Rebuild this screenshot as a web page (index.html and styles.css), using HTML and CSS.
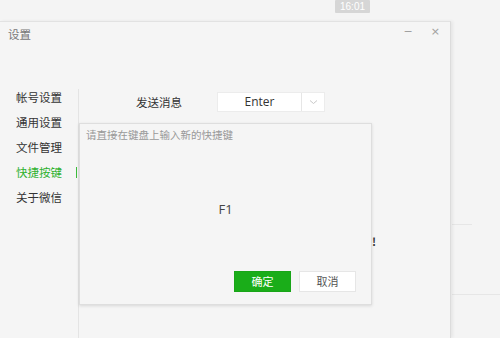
FILE: index.html
```html
<!DOCTYPE html>
<html lang="zh">
<head>
<meta charset="utf-8">
<link rel="stylesheet" href="styles.css">
</head>
<body>
<div class="topbar"><span class="time">16:01</span></div>
<div class="bg-line l1"></div>
<div class="bg-line l2"></div>
<div class="window">
  <div class="titlebar">
    <span class="title">设置</span>
    <div class="controls">
      <span class="min">−</span>
      <span class="close">×</span>
    </div>
  </div>
  <div class="main">
    <nav class="sidebar">
      <div class="item">帐号设置</div>
      <div class="item">通用设置</div>
      <div class="item">文件管理</div>
      <div class="item active">快捷按键<span class="mark"></span></div>
      <div class="item">关于微信</div>
    </nav>
    <div class="divider"></div>
    <div class="content">
      <div class="row">
        <span class="label">发送消息</span>
        <div class="select"><span class="value">Enter</span><span class="arrow"><svg width="9" height="6" viewBox="0 0 9 6"><path d="M1 1.5 L4.5 4.5 L8 1.5" fill="none" stroke="#c8c8c8" stroke-width="1"/></svg></span></div>
      </div>
      <div class="bang">!</div>
    </div>
  </div>
  <div class="dialog">
    <div class="hint">请直接在键盘上输入新的快捷键</div>
    <div class="key">F1</div>
    <div class="buttons">
      <button class="btn ok">确定</button>
      <button class="btn cancel">取消</button>
    </div>
  </div>
</div>
</body>
</html>
```
FILE: styles.css
```css
html, body {
  margin: 0;
  padding: 0;
}
body {
  width: 500px;
  height: 338px;
  overflow: hidden;
  background: #f4f4f4;
  font-family: "Noto Sans CJK SC", "Noto Sans", sans-serif;
  color: #333;
  position: relative;
}
.topbar {
  height: 21px;
  display: flex;
  align-items: flex-start;
}
.time {
  margin-left: 335px;
  width: 35px;
  height: 13px;
  background: #d6d6d6;
  color: #fff;
  font-family: "Liberation Sans", sans-serif;
  font-size: 10px;
  line-height: 13px;
  text-align: center;
  border-radius: 1px;
}
.bg-line {
  position: absolute;
  left: 452px;
  height: 1px;
  background: #e6e6e6;
}
.l1 {
  top: 224px;
  width: 20px;
}
.l2 {
  top: 294px;
  width: 48px;
}
.window {
  position: relative;
  width: 451px;
  height: 317px;
  box-sizing: border-box;
  background: #f5f5f5;
  border-top: 1px solid #e2e2e2;
  border-right: 1px solid #dcdcdc;
  box-shadow: 2px 0 3px rgba(0,0,0,0.06);
}
.titlebar {
  height: 62px;
  display: flex;
  justify-content: space-between;
  align-items: flex-start;
}
.title {
  margin-left: 8px;
  margin-top: 4px;
  font-size: 11.5px;
  line-height: 16px;
  color: #777;
}
.controls {
  display: flex;
  gap: 18px;
  margin-right: 10px;
  margin-top: 2px;
  color: #a0a0a0;
  font-family: "DejaVu Sans", sans-serif;
  font-size: 11px;
  line-height: 16px;
}
.main {
  display: flex;
  height: 254px;
}
.sidebar {
  width: 78px;
  flex: none;
  padding-top: 1px;
}
.item {
  height: 25px;
  line-height: 25px;
  padding-left: 16px;
  font-size: 11.5px;
  color: #333;
  display: flex;
  justify-content: space-between;
  align-items: center;
}
.item.active {
  color: #2fb12f;
}
.mark {
  width: 1px;
  height: 11px;
  background: #3cbc3c;
  margin-right: 1px;
}
.divider {
  width: 1px;
  background: #e4e4e4;
  margin-top: 5px;
  flex: none;
}
.content {
  flex: 1;
  padding-left: 57px;
  padding-top: 8px;
}
.row {
  display: flex;
  align-items: center;
  height: 20px;
}
.label {
  width: 81px;
  font-size: 11.5px;
  color: #333;
}
.select {
  width: 108px;
  height: 20px;
  box-sizing: border-box;
  background: #fff;
  border: 1px solid #ececec;
  display: flex;
}
.value {
  width: 83px;
  border-right: 1px solid #e6e6e6;
  text-align: center;
  font-family: "Open Sans", sans-serif;
  font-size: 12px;
  line-height: 18px;
  color: #333;
}
.arrow {
  flex: 1;
  display: flex;
  align-items: center;
  justify-content: center;
}
.bang {
  margin-left: 236px;
  margin-top: 123px;
  font-size: 11px;
  line-height: 12px;
  color: #333;
  font-weight: bold;
}
.dialog {
  position: absolute;
  left: 79px;
  top: 101px;
  width: 293px;
  height: 182px;
  box-sizing: border-box;
  background: #f5f5f5;
  border: 1px solid #dedede;
  box-shadow: 0 1px 3px rgba(0,0,0,0.12);
  display: flex;
  flex-direction: column;
  padding: 4px 15px 12px 6px;
}
.hint {
  font-size: 10.5px;
  line-height: 14px;
  color: #999;
}
.key {
  margin-top: 58px;
  text-align: center;
  font-family: "Open Sans", sans-serif;
  font-size: 13px;
  line-height: 18px;
  color: #444;
  padding-left: 9px;
}
.buttons {
  margin-top: auto;
  display: flex;
  justify-content: flex-end;
  gap: 8px;
}
.btn {
  width: 57px;
  height: 21px;
  box-sizing: border-box;
  margin: 0;
  padding: 0;
  font-family: "Noto Sans CJK SC", sans-serif;
  font-size: 11px;
  line-height: 19px;
  border-radius: 0;
}
.ok {
  background: #1aad19;
  border: 1px solid #19a518;
  color: #fff;
}
.cancel {
  background: #fff;
  border: 1px solid #e6e6e6;
  color: #555;
}
```
